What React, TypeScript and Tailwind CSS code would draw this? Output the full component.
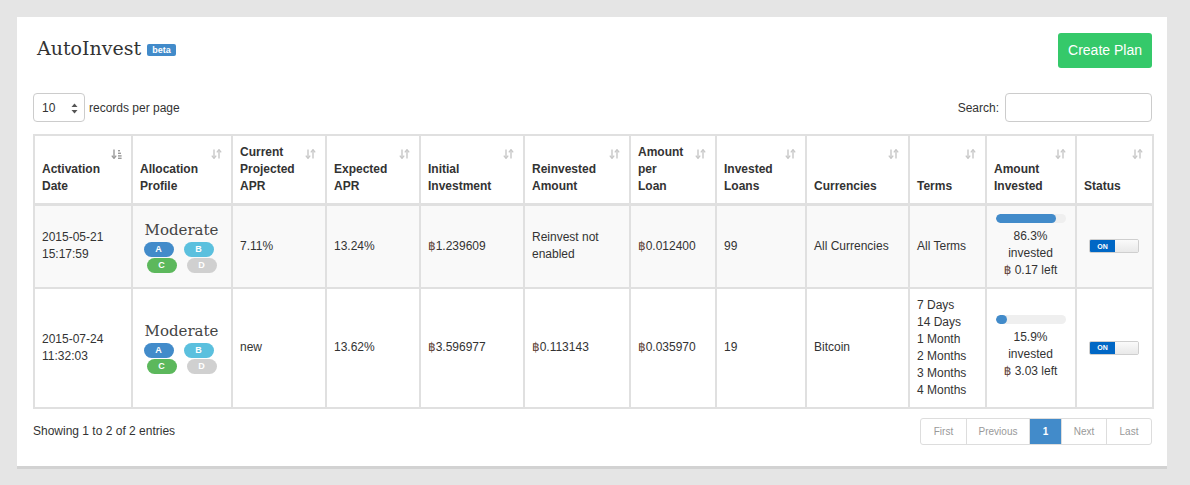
import React from 'react';

type Col = { w: number; label: string[]; active?: boolean };

const cols: Col[] = [
    { w: 98, label: ['Activation', 'Date'], active: true },
    { w: 100, label: ['Allocation', 'Profile'] },
    { w: 94, label: ['Current', 'Projected', 'APR'] },
    { w: 94, label: ['Expected', 'APR'] },
    { w: 104, label: ['Initial', 'Investment'] },
    { w: 106, label: ['Reinvested', 'Amount'] },
    { w: 86, label: ['Amount', 'per', 'Loan'] },
    { w: 90, label: ['Invested', 'Loans'] },
    { w: 103, label: ['Currencies'] },
    { w: 77, label: ['Terms'] },
    { w: 90, label: ['Amount', 'Invested'] },
    { w: 77, label: ['Status'] },
];

const SortIcon = ({ active }: { active?: boolean }) => {
    const c = active ? '#9a9a9a' : '#c8c8c8';
    return (
        <svg width="11" height="10" viewBox="0 0 11 10">
            <path d="M3 0.5V9" stroke={c} strokeWidth="1.4" fill="none" />
            <path d="M0.8 6.6L3 9.4L5.2 6.6" stroke={c} strokeWidth="1.3" fill="none" />
            {active ? (
                <>
                    <rect x="7" y="1" width="2" height="1.4" fill={c} />
                    <rect x="7" y="3.6" width="3" height="1.4" fill={c} />
                    <rect x="7" y="6.2" width="3.6" height="1.4" fill={c} />
                    <rect x="7" y="8.6" width="3.6" height="1.4" fill={c} />
                </>
            ) : (
                <>
                    <path d="M8 1V9.5" stroke={c} strokeWidth="1.4" fill="none" />
                    <path d="M5.8 3.4L8 0.6L10.2 3.4" stroke={c} strokeWidth="1.3" fill="none" />
                </>
            )}
        </svg>
    );
};

const Baht = () => <span className="text-[#5e4236]">฿</span>;

const Pill = ({ bg, label }: { bg: string; label: string }) => (
    <span className={`inline-flex items-center justify-center w-[30px] h-[15px] rounded-full ${bg} text-white text-[9px] font-bold leading-none`}>
        {label}
    </span>
);

const Profile = () => (
    <div className="flex flex-col items-center">
        <div className="font-['DejaVu_Serif',serif] text-[15px] leading-[20px] text-[#444]">Moderate</div>
        <div className="flex gap-[10px] pr-[6px] mt-[2px]">
            <Pill bg="bg-[#428bca]" label="A" />
            <Pill bg="bg-[#5bc0de]" label="B" />
        </div>
        <div className="flex gap-[10px] mt-[1px]">
            <Pill bg="bg-[#5cb85c]" label="C" />
            <Pill bg="bg-[#d0d0d0]" label="D" />
        </div>
    </div>
);

const Invested = ({ pct, left }: { pct: number; left: string }) => (
    <div className="flex flex-col items-center">
        <div className="w-[70px] h-[9px] rounded-full bg-[#efefef] overflow-hidden mb-[5px]">
            <div className="h-full bg-[#428bca] rounded-full" style={{ width: `${pct}%` }} />
        </div>
        <div>{pct}%</div>
        <div>invested</div>
        <div><Baht /> {left} left</div>
    </div>
);

const Toggle = () => (
    <div className="flex w-[50px] h-[14px] rounded-[2px] overflow-hidden border border-[#cfcfcf] mx-auto">
        <div className="w-[25px] bg-[#0067c5] text-white text-[7px] font-bold flex items-center justify-center">ON</div>
        <div className="flex-1 bg-gradient-to-b from-[#fafafa] to-[#e9e9e9]" />
    </div>
);

const rows: React.ReactNode[][] = [
    [
        <>2015-05-21<br />15:17:59</>,
        <Profile />,
        '7.11%',
        '13.24%',
        <><Baht />1.239609</>,
        <>Reinvest not<br />enabled</>,
        <><Baht />0.012400</>,
        '99',
        'All Currencies',
        'All Terms',
        <Invested pct={86.3} left="0.17" />,
        <Toggle />,
    ],
    [
        <>2015-07-24<br />11:32:03</>,
        <Profile />,
        'new',
        '13.62%',
        <><Baht />3.596977</>,
        <><Baht />0.113143</>,
        <><Baht />0.035970</>,
        '19',
        'Bitcoin',
        <>7 Days<br />14 Days<br />1 Month<br />2 Months<br />3 Months<br />4 Months</>,
        <Invested pct={15.9} left="3.03" />,
        <Toggle />,
    ],
];

const pages = [
    { label: 'First', w: 'w-[45px]' },
    { label: 'Previous', w: 'w-[63px]' },
    { label: '1', w: 'w-[32px]', active: true },
    { label: 'Next', w: 'w-[45px]' },
    { label: 'Last', w: 'w-[45px]' },
];

export default function App() {
    return (
        <div className="min-h-screen bg-[#e5e5e5] p-[17px] font-['Liberation_Sans','DejaVu_Sans',sans-serif] text-[#333]">
            <div className="w-[1150px] bg-white shadow-[0_3px_0_#d2d2d2] pl-[16px] pr-[15px] pt-[16px] pb-[21px]">
                <div className="flex justify-between items-start">
                    <div className="flex items-center pl-[4px] pt-[2px]">
                        <h1 className="font-['DejaVu_Serif',serif] text-[19px] leading-[26px] text-[#333]">AutoInvest</h1>
                        <span className="ml-[6px] mt-[3px] bg-[#428bca] text-white text-[9px] font-bold leading-[12px] px-[5px] rounded-[2px]">beta</span>
                    </div>
                    <button className="h-[35px] w-[94px] bg-[#35c96a] text-white text-[14px] rounded-[3px]">Create Plan</button>
                </div>

                <div className="flex justify-between items-center mt-[25px]">
                    <div className="flex items-center text-[12px]">
                        <div className="relative w-[52px] h-[29px] border border-[#ccc] rounded-[4px] flex items-center pl-[8px]">
                            <span>10</span>
                            <svg className="absolute right-[6px] top-[9px]" width="7" height="11" viewBox="0 0 7 11">
                                <path d="M0.5 4L3.5 0.5L6.5 4Z" fill="#555" />
                                <path d="M0.5 7L3.5 10.5L6.5 7Z" fill="#555" />
                            </svg>
                        </div>
                        <span className="ml-[4px]">records per page</span>
                    </div>
                    <div className="flex items-center text-[12px]">
                        <span className="mr-[6px]">Search:</span>
                        <input className="w-[147px] h-[29px] border border-[#ccc] rounded-[4px] outline-none" />
                    </div>
                </div>

                <table className="mt-[12px] table-fixed border-collapse w-[1119px] text-[12px] leading-[17px]">
                    <colgroup>
                        {cols.map((c, i) => (
                            <col key={i} style={{ width: c.w }} />
                        ))}
                    </colgroup>
                    <thead>
                        <tr>
                            {cols.map((c, i) => (
                                <th key={i} className="relative border-2 border-b-[3px] border-[#e0e0e0] align-bottom text-left font-bold pl-[7px] pr-[8px] pt-[6px] pb-[8px] h-[69px]">
                                    <span className="absolute top-[13px] right-[9px]">
                                        <SortIcon active={c.active} />
                                    </span>
                                    {c.label.map((l, j) => (
                                        <div key={j}>{l}</div>
                                    ))}
                                </th>
                            ))}
                        </tr>
                    </thead>
                    <tbody>
                        {rows.map((r, i) => (
                            <tr key={i} className={i === 0 ? 'bg-[#f9f9f9]' : 'bg-white'}>
                                {r.map((cell, j) => (
                                    <td key={j} className={`border-2 border-[#e0e0e0] align-middle pl-[7px] pr-[8px] py-[8px] ${j === 10 ? 'text-center' : ''}`}>
                                        {cell}
                                    </td>
                                ))}
                            </tr>
                        ))}
                    </tbody>
                </table>

                <div className="flex justify-between items-center mt-[9px]">
                    <div className="text-[12px]">Showing 1 to 2 of 2 entries</div>
                    <div className="flex h-[27px] border border-[#ddd] rounded-[3px] overflow-hidden text-[10px]">
                        {pages.map((p, i) => (
                            <div
                                key={i}
                                className={`${p.w} flex items-center justify-center ${i > 0 ? 'border-l border-[#ddd]' : ''} ${p.active ? 'bg-[#428bca] text-white font-bold' : 'text-[#999]'}`}
                            >
                                {p.label}
                            </div>
                        ))}
                    </div>
                </div>
            </div>
        </div>
    );
}
